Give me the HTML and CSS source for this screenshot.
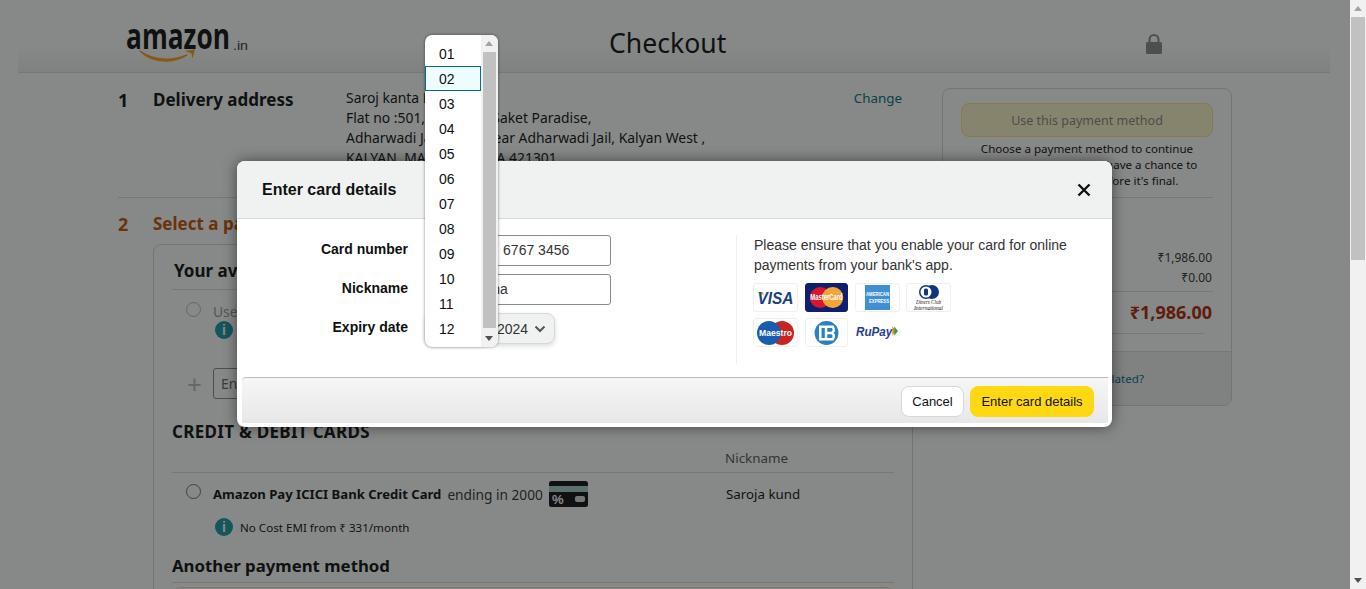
FILE: index.html
```html
<!DOCTYPE html>
<html lang="en">
<head>
    <meta charset="UTF-8">
    <title>Checkout</title>
    <link rel="stylesheet" href="styles.css">
</head>
<body>
<div class="page">
    <div class="content">
        <header class="checkout-head">
            <svg class="logo" width="126" height="44" viewBox="0 0 126 44">
                <text class="logo-word" x="0" y="25" textLength="104" lengthAdjust="spacingAndGlyphs">amazon</text>
                <text class="logo-in" x="107" y="26" textLength="15" lengthAdjust="spacingAndGlyphs">.in</text>
                <path d="M14 27c13 9 32 11 47 4c-14 9-35 8-47-4z" fill="#ff9f1c" stroke="#ff9f1c" stroke-width="1.4" stroke-linejoin="round"/>
                <path d="M59 27l10-1.500-2.500 9-1-5z" fill="#ff9f1c"/>
            </svg>
            <h1 class="checkout-title">Checkout</h1>
            <svg class="lock" width="18" height="22" viewBox="0 0 18 22">
                <path d="M4.500 10V6.500a4.500 4.500 0 0 1 9 0V10" fill="none" stroke="#8a8a8a" stroke-width="2"/>
                <rect x="1" y="9" width="16" height="12" rx="1.500" fill="#8a8a8a"/>
            </svg>
        </header>

        <div class="checkout-body">
            <main class="steps">
                <section class="step address-step">
                    <span class="step-num">1</span>
                    <h2 class="step-title">Delivery address</h2>
                    <p class="address">
                        Saroj kanta Kund<br>
                        Flat no :501, Shree Sai Saket Paradise,<br>
                        Adharwadi Jail Road, Near Adharwadi Jail, Kalyan West ,<br>
                        KALYAN, MAHARASHTRA 421301
                    </p>
                    <a class="link change-link">Change</a>
                </section>

                <section class="step payment-head">
                    <span class="step-num orange">2</span>
                    <h2 class="step-title orange">Select a payment method</h2>
                </section>

                <div class="pay-box">
                    <h3 class="box-title">Your available balance</h3>
                    <div class="pay-row balance-row">
                        <span class="radio disabled"></span>
                        <div>
                            <div class="muted">Use your ₹0.00 Amazon Pay Balance</div>
                            <div class="info-line">
                                <span class="info">i</span>
                                <span class="small">Insufficient balance</span>
                            </div>
                        </div>
                    </div>
                    <div class="code-row">
                        <span class="plus">+</span>
                        <div class="code-input">Enter Code</div>
                    </div>
                    <h3 class="cards-title">CREDIT &amp; DEBIT CARDS</h3>
                    <div class="nick-head">Nickname</div>
                    <div class="pay-row card-row">
                        <span class="radio"></span>
                        <div class="card-main">
                            <div class="card-name"><b>Amazon Pay ICICI Bank Credit Card</b> <span class="ending">ending in 2000</span>
                                <svg class="mini-card" width="39" height="26" viewBox="0 0 39 26">
                                    <rect width="39" height="26" rx="2.500" fill="#111"/>
                                    <rect y="5" width="39" height="6" fill="#a8d0c8"/>
                                    <text class="mini-pct" x="3" y="23">%</text>
                                    <rect x="26" y="15" width="10" height="6" rx="2" fill="#ddd"/>
                                </svg>
                            </div>
                            <div class="info-line emi">
                                <span class="info">i</span>
                                <span class="small">No Cost EMI from ₹ 331/month</span>
                            </div>
                        </div>
                        <div class="card-nick">Saroja kund</div>
                    </div>
                    <h3 class="another-title">Another payment method</h3>
                    <div class="selected-row"></div>
                </div>
            </main>

            <aside class="summary">
                <div class="summary-top">
                    <button class="use-btn">Use this payment method</button>
                    <p class="summary-note">Choose a payment method to continue checking out. You'll still have a chance to review your order before it's final.</p>
                    <h3 class="summary-title">Order Summary</h3>
                    <div class="sum-line"><span>Items:</span><span>₹1,986.00</span></div>
                    <div class="sum-line"><span>Delivery:</span><span>₹0.00</span></div>
                    <div class="sum-total"><span>Order Total:</span><span>₹1,986.00</span></div>
                    <div class="sum-rule"></div>
                </div>
                <div class="summary-foot"><a class="link">How are delivery costs calculated?</a></div>
            </aside>
        </div>

        <div class="overlay"></div>

        <div class="modal">
            <div class="modal-head">
                <h4 class="modal-title">Enter card details</h4>
                <svg class="modal-close" width="14" height="14" viewBox="0 0 14 14">
                    <path d="M1.500 1.500l11 11M12.500 1.500l-11 11" stroke="#111" stroke-width="2.400" fill="none"/>
                </svg>
            </div>
            <div class="modal-body">
                <form class="card-form">
                    <div class="form-row">
                        <label class="form-label">Card number</label>
                        <div class="text-input">4315 812 &nbsp;&nbsp;6767 3456</div>
                    </div>
                    <div class="form-row">
                        <label class="form-label">Nickname</label>
                        <div class="text-input">Saroja kuna</div>
                    </div>
                    <div class="form-row">
                        <label class="form-label">Expiry date</label>
                        <div class="expiry">
                            <div class="select-btn month">01</div>
                            <div class="select-btn year">2024
                                <svg width="12" height="8" viewBox="0 0 12 8"><path d="M1.500 1.500L6 6l4.500-4.500" fill="none" stroke="#555" stroke-width="2"/></svg>
                            </div>
                        </div>
                    </div>
                </form>
                <div class="card-info">
                    <p class="card-msg">Please ensure that you enable your card for online payments from your bank's app.</p>
                    <div class="logos">
                        <span class="logo-box">
                            <svg viewBox="0 0 43 27">
                                <path d="M3 8l6 0 1 3z" fill="#e8a42a"/>
                                <text class="visa-text" x="21.500" y="20" text-anchor="middle" textLength="36" lengthAdjust="spacingAndGlyphs">VISA</text>
                            </svg>
                        </span>
                        <span class="logo-box navy">
                            <svg viewBox="0 0 43 27">
                                <circle cx="15" cy="13.500" r="11" fill="#d5182b"/>
                                <circle cx="28" cy="13.500" r="11" fill="#f2a63a"/>
                                <text class="mc-text" x="21.500" y="16" text-anchor="middle" textLength="34" lengthAdjust="spacingAndGlyphs">MasterCard</text>
                            </svg>
                        </span>
                        <span class="logo-box">
                            <svg viewBox="0 0 43 27">
                                <rect x="9" y="1" width="25" height="25" fill="#3f8fd2"/>
                                <text class="amex-text" x="21.500" y="12" text-anchor="middle" textLength="23" lengthAdjust="spacingAndGlyphs">AMERICAN</text>
                                <text class="amex-text" x="23" y="19" text-anchor="middle" textLength="20" lengthAdjust="spacingAndGlyphs">EXPRESS</text>
                            </svg>
                        </span>
                        <span class="logo-box">
                            <svg viewBox="0 0 43 27">
                                <circle cx="25" cy="8" r="7" fill="#12357e"/>
                                <circle cx="19" cy="8" r="7" fill="#12357e"/>
                                <circle cx="19" cy="8" r="5.500" fill="#fff"/>
                                <rect x="17" y="4.500" width="4" height="7" rx="1.500" fill="#12357e"/>
                                <text class="diners-text" x="21.500" y="20" text-anchor="middle" textLength="25" lengthAdjust="spacingAndGlyphs">Diners Club</text>
                                <text class="diners-text" x="21.500" y="25.500" text-anchor="middle" textLength="29" lengthAdjust="spacingAndGlyphs">International</text>
                            </svg>
                        </span>
                        <span class="logo-box">
                            <svg viewBox="0 0 43 27">
                                <circle cx="28" cy="14" r="12" fill="#c8251f"/>
                                <circle cx="15" cy="14" r="12" fill="#1b5cae"/>
                                <text class="mc-text" x="21.500" y="17" text-anchor="middle" textLength="33" lengthAdjust="spacingAndGlyphs">Maestro</text>
                            </svg>
                        </span>
                        <span class="logo-box slim">
                            <svg viewBox="0 0 43 27">
                                <circle cx="21.500" cy="14" r="12.500" fill="#2a80c0"/>
                                <path d="M15 7.500h6v13h-6zM21 7.500h7l1 2v2.500l-2 2 2 2v2.500l-1 2h-7M21 14h5" fill="none" stroke="#fff" stroke-width="2.600"/>
                            </svg>
                        </span>
                        <span class="logo-box plain">
                            <svg viewBox="0 0 45 27">
                                <text class="rupay-text" x="0" y="17" textLength="38" lengthAdjust="spacingAndGlyphs">RuPay</text>
                                <path d="M38 7l4 5-4 5z" fill="#f08a24"/>
                                <path d="M40 7l4 5-4 5z" fill="#3f9c46"/>
                            </svg>
                        </span>
                    </div>
                </div>
            </div>
            <div class="modal-foot">
                <button class="btn-cancel">Cancel</button>
                <button class="btn-enter">Enter card details</button>
            </div>
        </div>

        <div class="month-menu">
            <ul class="month-list">
                <li>01</li>
                <li class="current">02</li>
                <li>03</li>
                <li>04</li>
                <li>05</li>
                <li>06</li>
                <li>07</li>
                <li>08</li>
                <li>09</li>
                <li>10</li>
                <li>11</li>
                <li>12</li>
            </ul>
            <div class="menu-scroll">
                <span class="arrow-up"></span>
                <span class="menu-thumb"></span>
                <span class="arrow-down"></span>
            </div>
        </div>
    </div>
    <div class="page-scroll">
        <span class="arrow-up"></span>
        <span class="page-thumb"></span>
        <span class="arrow-down"></span>
    </div>
</div>
</body>
</html>
```

FILE: styles.css
```css
html, body {
    margin: 0;
    padding: 0;
    height: 100%;
    overflow: hidden;
}
body {
    font-family: "Noto Sans", Arial, sans-serif;
    font-size: 13.85px;
    color: #0f1111;
    background-color: #fff;
}
h1, h2, h3, h4, p, ul {
    margin: 0;
    padding: 0;
}
.page {
    display: flex;
    height: 589px;
}
.content {
    position: relative;
    width: 1350px;
    height: 589px;
    overflow: hidden;
    flex: none;
}
.page-scroll {
    position: relative;
    width: 16px;
    background-color: #f1f1f1;
    padding-top: 17px;
    display: flex;
    justify-content: center;
    align-items: flex-start;
}
.page-thumb {
    width: 14px;
    height: 243px;
    background-color: #c1c1c1;
}

/* header */
.checkout-head {
    display: flex;
    align-items: center;
    height: 73px;
    margin: 0 20px 0 18px;
    border-bottom: 1px solid #ddd;
    box-sizing: border-box;
    background: linear-gradient(to bottom, #fff 60%, #f0f1f1 100%);
}
.logo {
    align-self: flex-start;
    margin-left: 108px;
    margin-top: 24px;
    overflow: visible;
    flex: none;
}
.logo-word {
    font-family: "Open Sans", sans-serif;
    font-weight: 700;
    font-size: 36px;
    fill: #111;
}
.logo-in {
    font-family: "Liberation Sans", sans-serif;
    font-size: 13px;
    fill: #333;
}
.checkout-title {
    margin-left: 357px;
    margin-top: 14px;
    font-size: 26.6px;
    font-weight: 400;
}
.lock {
    margin-left: auto;
    margin-right: 167px;
    margin-top: 16px;
}

/* left column */
.checkout-body {
    display: flex;
    padding-left: 118px;
}
.steps {
    width: 784px;
    flex: none;
}
.step {
    display: flex;
}
.address-step {
    height: 109px;
    padding-top: 15px;
    border-bottom: 1px solid #ddd;
}
.payment-head {
    height: 46px;
    padding-top: 14px;
    box-sizing: border-box;
}
.step-num {
    width: 35px;
    font-size: 18px;
    font-weight: 700;
    line-height: 24px;
}
.step-title {
    width: 193px;
    font-size: 17px;
    font-weight: 700;
    line-height: 24px;
    white-space: nowrap;
}
.orange {
    color: #c45500;
}
.address {
    font-size: 13.9px;
    line-height: 20px;
    width: 400px;
}
.link {
    color: #007185;
}
.change-link {
    margin-left: auto;
    font-size: 13.4px;
    line-height: 20px;
}
.pay-box {
    margin-left: 35px;
    margin-right: -11px;
    height: 400px;
    padding: 14px 18px 0 18px;
    border: 1px solid #d5d9d9;
    border-radius: 8px;
}
.box-title {
    font-size: 17px;
    font-weight: 700;
    line-height: 24px;
    padding-bottom: 6px;
    padding-left: 2px;
    border-bottom: 1px solid #ddd;
    white-space: nowrap;
}
.pay-row {
    display: flex;
}
.balance-row {
    padding: 12px 0 0 14px;
    height: 66px;
}
.radio {
    width: 13px;
    height: 13px;
    border: 1px solid #6f7373;
    border-radius: 50%;
    background-color: #fff;
    margin-right: 12px;
    flex: none;
}
.radio.disabled {
    border-color: #bbb;
}
.muted {
    color: #999;
    line-height: 19px;
}
.info-line {
    display: flex;
    align-items: center;
    gap: 7px;
    margin-left: 2px;
}
.info {
    width: 18px;
    height: 18px;
    border-radius: 50%;
    background-color: #1a98a6;
    color: #fff;
    font-family: "Liberation Sans", sans-serif;
    font-weight: 700;
    font-size: 14px;
    line-height: 18px;
    text-align: center;
    flex: none;
}
.small {
    font-size: 11.6px;
}
.code-row {
    display: flex;
    align-items: center;
    height: 31px;
    padding-left: 15px;
}
.plus {
    width: 26px;
    font-size: 26px;
    color: #bbb;
    line-height: 30px;
}
.code-input {
    width: 200px;
    height: 29px;
    line-height: 29px;
    padding-left: 7px;
    border: 1px solid #888c8c;
    border-radius: 3px;
    color: #666;
}
.cards-title {
    font-size: 17px;
    font-weight: 700;
    line-height: 24px;
    letter-spacing: 0.3px;
    margin-top: 21px;
    white-space: nowrap;
}
.nick-head {
    padding-left: 553px;
    font-size: 13.4px;
    line-height: 20px;
    margin-top: 4px;
    padding-bottom: 4px;
    border-bottom: 1px solid #ddd;
    color: #565959;
}
.card-row {
    padding: 11px 0 0 14px;
    height: 70px;
}
.card-main {
    width: 513px;
    flex: none;
}
.card-name {
    display: flex;
    align-items: center;
    gap: 6px;
    height: 20px;
    font-size: 13.1px;
    white-space: nowrap;
}
.ending {
    font-size: 13.7px;
    color: #333;
}
.mini-card {
    flex: none;
}
.mini-pct {
    font-family: "Liberation Sans", sans-serif;
    font-weight: 700;
    font-size: 13px;
    fill: #fff;
}
.emi {
    margin-top: 14px;
}
.card-nick {
    font-size: 13.3px;
    line-height: 20px;
}
.another-title {
    font-size: 16.8px;
    font-weight: 700;
    line-height: 24px;
    padding-bottom: 4px;
    border-bottom: 1px solid #ddd;
    white-space: nowrap;
}
.selected-row {
    height: 40px;
    margin-top: 4px;
    border: 1px solid #fbd8b4;
    background-color: #fcf5ee;
    border-radius: 8px;
}

/* right column */
.summary {
    width: 288px;
    height: 316px;
    margin-left: 40px;
    margin-top: 15px;
    border: 1px solid #d5d9d9;
    border-radius: 8px;
    overflow: hidden;
    flex: none;
    display: flex;
    flex-direction: column;
}
.summary-top {
    padding: 14px 18px 0;
    flex: 1;
}
.use-btn {
    width: 100%;
    height: 34px;
    font-family: inherit;
    font-size: 12.5px;
    color: #888;
    background-color: #fff6c8;
    border: 1px solid #fce48a;
    border-radius: 8px;
}
.summary-note {
    font-size: 11.6px;
    line-height: 16px;
    text-align: center;
    padding: 4px 0 8px;
    border-bottom: 1px solid #ddd;
}
.summary-title {
    font-size: 17px;
    line-height: 24px;
    margin: 12px 0 14px;
}
.sum-line {
    display: flex;
    justify-content: space-between;
    font-size: 12px;
    line-height: 20px;
    padding-right: 1px;
    color: #333;
}
.sum-total {
    display: flex;
    justify-content: space-between;
    font-size: 18px;
    font-weight: 700;
    line-height: 41px;
    margin-top: 3px;
    padding-right: 1px;
    border-top: 1px solid #ddd;
    color: #b12704;
}
.sum-rule {
    margin-right: 9px;
    border-bottom: 1px solid #ddd;
}
.summary-foot {
    height: 53px;
    line-height: 53px;
    font-size: 11.6px;
    padding-left: 16px;
    background-color: #f0f2f2;
    border-top: 1px solid #ddd;
    white-space: nowrap;
}

/* dim layer, popup and dropdown */
.overlay {
    position: absolute;
    inset: 0;
    background-color: rgba(15, 17, 17, 0.5);
}
.modal {
    position: absolute;
    left: 237px;
    top: 161px;
    width: 875px;
    height: 266px;
    display: flex;
    flex-direction: column;
    font-family: "Liberation Sans", Arial, sans-serif;
    font-size: 14px;
    background-color: #fff;
    border-radius: 8px;
    overflow: hidden;
    box-shadow: 0 0 14px rgba(0, 0, 0, 0.5);
}
.modal-head {
    display: flex;
    align-items: center;
    justify-content: space-between;
    height: 57px;
    padding: 0 21px 0 25px;
    background-color: #f0f2f2;
    border-bottom: 1px solid #d5d9d9;
    flex: none;
}
.modal-title {
    font-size: 16px;
    font-weight: 700;
}
.modal-close {
    margin-top: 1px;
}
.modal-body {
    display: flex;
    padding-top: 16px;
    height: 142px;
    flex: none;
}
.card-form {
    width: 499px;
    height: 129px;
    border-right: 1px solid #eee;
    flex: none;
}
.form-row {
    display: flex;
    align-items: center;
    gap: 17px;
    margin-bottom: 8px;
}
.form-label {
    width: 171px;
    text-align: right;
    font-weight: 700;
    margin-top: -3px;
}
.text-input {
    width: 177px;
    height: 29px;
    line-height: 29px;
    padding-left: 7px;
    border: 1px solid #888c8c;
    border-radius: 3px;
    color: #333;
}
.expiry {
    display: flex;
    gap: 4px;
}
.select-btn {
    display: flex;
    align-items: center;
    justify-content: space-between;
    height: 29px;
    padding: 0 7px;
    background-color: #f0f2f2;
    border: 1px solid #d5d9d9;
    border-radius: 8px;
    color: #333;
    box-shadow: 0 2px 5px rgba(15, 17, 17, 0.15);
}
.month {
    width: 46px;
}
.year {
    width: 49px;
    padding: 0 8px 0 5px;
}
.card-info {
    padding-left: 17px;
    width: 340px;
}
.card-msg {
    line-height: 20px;
    color: #333;
}
.logos {
    display: flex;
    flex-wrap: wrap;
    gap: 6px;
    margin-top: 8px;
    margin-left: -1px;
    width: 210px;
}
.logo-box {
    display: block;
    width: 43px;
    height: 27px;
    border: 1px solid #f0f0f0;
    border-radius: 3px;
    overflow: hidden;
}
.logo-box svg {
    display: block;
    width: 100%;
    height: 100%;
}
.logo-box.navy {
    width: 41px;
    margin: 0 1px;
    background-color: #0d1f6d;
    border-color: #0d1f6d;
}
.logo-box.slim {
    width: 41px;
    margin: 0 1px;
}
.logo-box.plain {
    border-color: transparent;
}
.visa-text {
    font-family: "Liberation Sans", sans-serif;
    font-weight: 700;
    font-style: italic;
    font-size: 17px;
    fill: #1a3f86;
}
.mc-text {
    font-family: "Liberation Sans", sans-serif;
    font-weight: 700;
    font-size: 9px;
    fill: #fff;
}
.amex-text {
    font-family: "Liberation Sans", sans-serif;
    font-weight: 700;
    font-size: 5px;
    fill: #fff;
}
.diners-text {
    font-family: "Liberation Serif", serif;
    font-style: italic;
    font-size: 7px;
    fill: #111;
}
.rupay-text {
    font-family: "Liberation Sans", sans-serif;
    font-weight: 700;
    font-style: italic;
    font-size: 14px;
    fill: #2a3d8f;
}
.modal-foot {
    display: flex;
    align-items: center;
    justify-content: flex-end;
    gap: 6px;
    height: 46px;
    margin: 0 4px 4px 5px;
    padding: 2px 14px 0 0;
    box-sizing: border-box;
    border-top: 1px solid #bbb;
    border-radius: 4px 0 0 0;
    background: linear-gradient(to bottom, #f6f6f6, #e7e7e7);
}
.btn-cancel, .btn-enter {
    height: 31px;
    font-family: inherit;
    font-size: 13px;
    border-radius: 8px;
    color: #0f1111;
}
.btn-cancel {
    width: 63px;
    background-color: #fff;
    border: 1px solid #d5d9d9;
}
.btn-enter {
    width: 124px;
    background-color: #ffd814;
    border: 1px solid #ffd814;
}
.month-menu {
    position: absolute;
    left: 425px;
    top: 35px;
    width: 73px;
    height: 312px;
    display: flex;
    font-family: "Liberation Sans", Arial, sans-serif;
    font-size: 14px;
    background-color: #fff;
    border-radius: 7px;
    overflow: hidden;
    box-shadow: 0 0 3px rgba(0, 0, 0, 0.5);
}
.month-list {
    list-style: none;
    width: 56px;
    padding-top: 6px;
    flex: none;
}
.month-list li {
    height: 25px;
    line-height: 27px;
    padding-left: 14px;
    box-sizing: border-box;
}
.month-list .current {
    background-color: #edfdff;
    border: 1px solid #007185;
    padding-left: 13px;
    line-height: 25px;
}
.menu-scroll {
    position: relative;
    width: 17px;
    background-color: #f1f1f1;
}
.menu-thumb {
    position: absolute;
    left: 2px;
    top: 17px;
    width: 13px;
    height: 276px;
    background-color: #c1c1c1;
}
.arrow-up, .arrow-down {
    position: absolute;
    left: 4px;
    border-left: 4px solid transparent;
    border-right: 4px solid transparent;
}
.arrow-up {
    top: 6px;
    border-bottom: 5px solid #a3a3a3;
}
.arrow-down {
    bottom: 6px;
    border-top: 5px solid #505050;
}
```
